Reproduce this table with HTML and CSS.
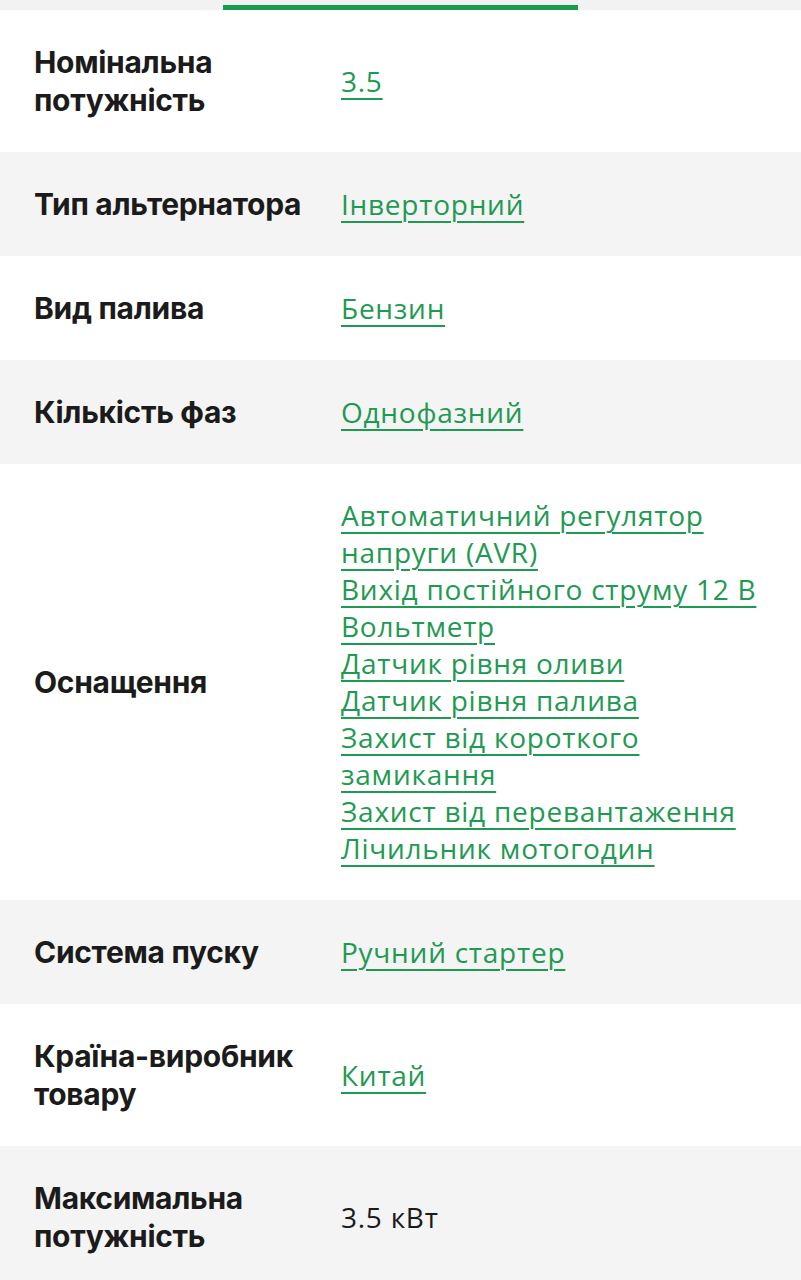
FILE: index.html
```html
<!DOCTYPE html>
<html lang="uk">
<head>
<meta charset="utf-8">
<link rel="stylesheet" href="styles.css">
</head>
<body>
<div class="tabs"><span class="tab-indicator"></span></div>
<div class="specs">
  <div class="row">
    <div class="label">Номінальна потужність</div>
    <div class="value"><a href="#">3.5</a></div>
  </div>
  <div class="row alt">
    <div class="label">Тип альтернатора</div>
    <div class="value"><a href="#">Інверторний</a></div>
  </div>
  <div class="row">
    <div class="label">Вид палива</div>
    <div class="value"><a href="#">Бензин</a></div>
  </div>
  <div class="row alt">
    <div class="label">Кількість фаз</div>
    <div class="value"><a href="#">Однофазний</a></div>
  </div>
  <div class="row">
    <div class="label">Оснащення</div>
    <div class="value list">
      <a href="#">Автоматичний регулятор напруги (AVR)</a>
      <a href="#">Вихід постійного струму 12 В</a>
      <a href="#">Вольтметр</a>
      <a href="#">Датчик рівня оливи</a>
      <a href="#">Датчик рівня палива</a>
      <a href="#">Захист від короткого замикання</a>
      <a href="#">Захист від перевантаження</a>
      <a href="#">Лічильник мотогодин</a>
    </div>
  </div>
  <div class="row alt">
    <div class="label">Система пуску</div>
    <div class="value"><a href="#">Ручний стартер</a></div>
  </div>
  <div class="row">
    <div class="label">Країна-виробник товару</div>
    <div class="value"><a href="#">Китай</a></div>
  </div>
  <div class="row alt">
    <div class="label">Максимальна потужність</div>
    <div class="value">3.5 кВт</div>
  </div>
</div>
</body>
</html>
```

FILE: styles.css
```css
* { box-sizing: border-box; }
html, body { margin: 0; padding: 0; background: #ffffff; }
body { font-family: "Open Sans", "Noto Sans", sans-serif; color: #1b1b1b; }

.tabs {
  height: 10px;
  background: #f2f2f2;
  display: flex;
  justify-content: center;
  align-items: flex-end;
}
.tab-indicator {
  display: block;
  width: 355px;
  height: 5px;
  background: #1a9a4b;
}

.specs { display: flex; flex-direction: column; }

.row {
  display: grid;
  grid-template-columns: 307px 1fr;
  align-items: center;
  padding: 33px 34px 33px 34px;
  background: #ffffff;
}
.row.alt { background: #f4f4f4; }

.label {
  font-family: Inter, Roboto, "Noto Sans", sans-serif;
  font-weight: 700;
  font-size: 30px;
  line-height: 38px;
  letter-spacing: -0.3px;
  color: #1b1b1b;
  padding-right: 4px;
}

.value {
  font-size: 28px;
  line-height: 37px;
  letter-spacing: 0.75px;
  color: #1b1b1b;
}
.value.list { display: flex; flex-direction: column; align-items: flex-start; }
.value a {
  color: #1f9a52;
  text-decoration: underline;
  text-decoration-thickness: 2px;
  text-underline-offset: 6px;
}
```
